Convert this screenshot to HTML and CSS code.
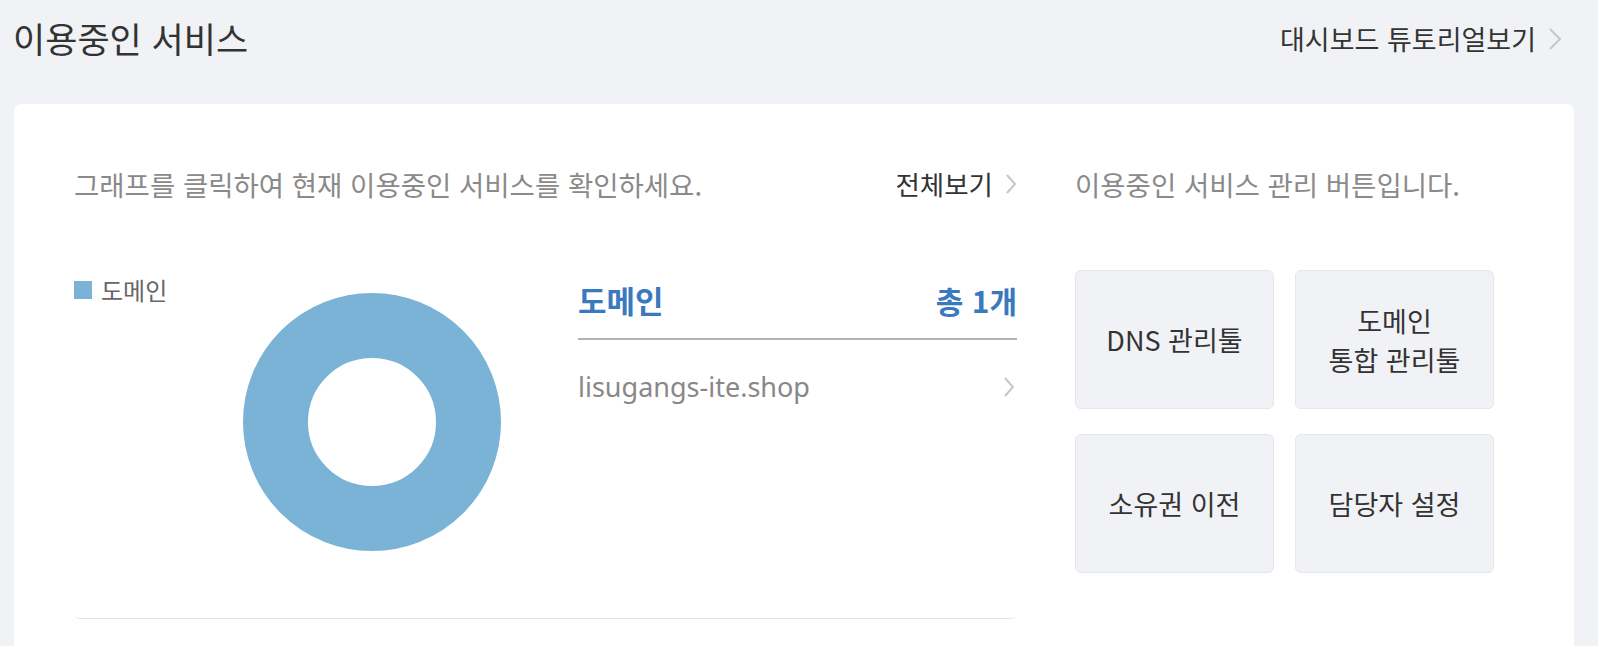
FILE: index.html
```html
<!DOCTYPE html>
<html lang="ko">
<head>
<meta charset="utf-8">
<title>이용중인 서비스</title>
<link rel="stylesheet" href="styles.css">
</head>
<body>
<div class="header">
  <h1 class="title">이용중인 서비스</h1>
  <a class="tutorial" href="#">대시보드 튜토리얼보기
    <svg class="chev chev-lg" viewBox="0 0 14 24" width="14" height="24"><polyline points="2,2 12,12 2,22" /></svg>
  </a>
</div>
<div class="card">
  <div class="left">
    <div class="sub-row">
      <p class="sub">그래프를 클릭하여 현재 이용중인 서비스를 확인하세요.</p>
      <a class="all" href="#">전체보기
        <svg class="chev chev-md" viewBox="0 0 12 22" width="12" height="22"><polyline points="2,2 10,11 2,20" /></svg>
      </a>
    </div>
    <div class="chart-box">
      <div class="legend"><span class="swatch"></span><span class="legend-text">도메인</span></div>
      <svg class="donut" viewBox="0 0 258 258" width="258" height="258"><circle cx="129" cy="129" r="96.5" /></svg>
      <div class="list">
        <div class="list-head"><span class="list-title">도메인</span><span class="list-count">총 1개</span></div>
        <a class="list-item" href="#"><span>lisugangs-ite.shop</span>
          <svg class="chev chev-md" viewBox="0 0 12 22" width="12" height="22"><polyline points="2,2 10,11 2,20" /></svg>
        </a>
      </div>
    </div>
  </div>
  <div class="right">
    <p class="sub">이용중인 서비스 관리 버튼입니다.</p>
    <div class="btns">
      <button class="btn">DNS 관리툴</button>
      <button class="btn">도메인<br>통합 관리툴</button>
      <button class="btn">소유권 이전</button>
      <button class="btn">담당자 설정</button>
    </div>
  </div>
</div>
</body>
</html>
```
FILE: styles.css
```css
* { box-sizing: border-box; }
body {
  margin: 0;
  background: #f1f2f6;
  font-family: "Noto Sans CJK KR", "Noto Sans", sans-serif;
  color: #333;
  overflow: hidden;
}
a { text-decoration: none; color: inherit; }
p { margin: 0; }

.header {
  height: 78px;
  display: flex;
  align-items: center;
  justify-content: space-between;
  padding: 0 36px 0 13px;
}
.title {
  margin: 0;
  font-size: 35px;
  font-weight: 400;
  color: #333;
  line-height: 44px;
  margin-top: -3px;
}
.tutorial {
  display: flex;
  align-items: center;
  gap: 12px;
  font-size: 27px;
  color: #333;
  line-height: 40px;
}

.chev polyline { fill: none; stroke: #c6c6c6; stroke-width: 2; }

.card {
  margin: 26px 24px 0 14px;
  background: #fff;
  border-radius: 8px;
  padding: 58px 60px 40px 60px;
  display: flex;
  gap: 58px;
}
.left { width: 943px; flex-shrink: 0; }
.right { flex: 1; }

.sub-row {
  display: flex;
  justify-content: space-between;
  align-items: center;
  height: 44px;
}
.sub {
  font-size: 27.5px;
  color: #8a8a8a;
  line-height: 44px;
}
.all {
  display: flex;
  align-items: center;
  gap: 12px;
  font-size: 26.5px;
  color: #333;
  line-height: 44px;
}

.chart-box {
  margin-top: 56px;
  height: 356px;
  display: flex;
  align-items: flex-start;
  border-radius: 6px;
  box-shadow: 0 2px 1px -1px rgba(0,0,0,0.12);
}
.legend {
  width: 169px;
  flex-shrink: 0;
  margin-top: 16px;
  display: flex;
  align-items: center;
  gap: 9px;
  line-height: 24px;
}
.swatch {
  width: 18px;
  height: 18px;
  background: #7ab3d6;
}
.legend-text { font-size: 24px; color: #666; }
.donut { margin-top: 31px; flex-shrink: 0; }
.donut circle { fill: none; stroke: #7ab3d6; stroke-width: 65; }

.list {
  margin-left: 77px;
  width: 439px;
  margin-top: 18px;
}
.list-head {
  display: flex;
  justify-content: space-between;
  align-items: center;
  line-height: 40px;
  padding-bottom: 18px;
  border-bottom: 2px solid #b0b3bb;
  color: #3a79bd;
  font-weight: 700;
}
.list-title { font-size: 31px; }
.list-count { font-size: 30px; }
.list-item {
  display: flex;
  justify-content: space-between;
  align-items: center;
  padding-top: 27px;
  line-height: 40px;
  font-size: 27px;
  color: #888;
  font-family: "Noto Sans", sans-serif;
}
.list-item .chev { margin-right: 2px; }

.btns {
  margin-top: 64px;
  display: grid;
  grid-template-columns: 199px 199px;
  grid-auto-rows: 139px;
  column-gap: 21px;
  row-gap: 25px;
}
.btn {
  background: #f1f2f6;
  border: 1px solid #e5e6ea;
  border-radius: 6px;
  font-family: "Noto Sans CJK KR", sans-serif;
  font-size: 27px;
  line-height: 39px;
  color: #333;
  padding: 0;
}
```
